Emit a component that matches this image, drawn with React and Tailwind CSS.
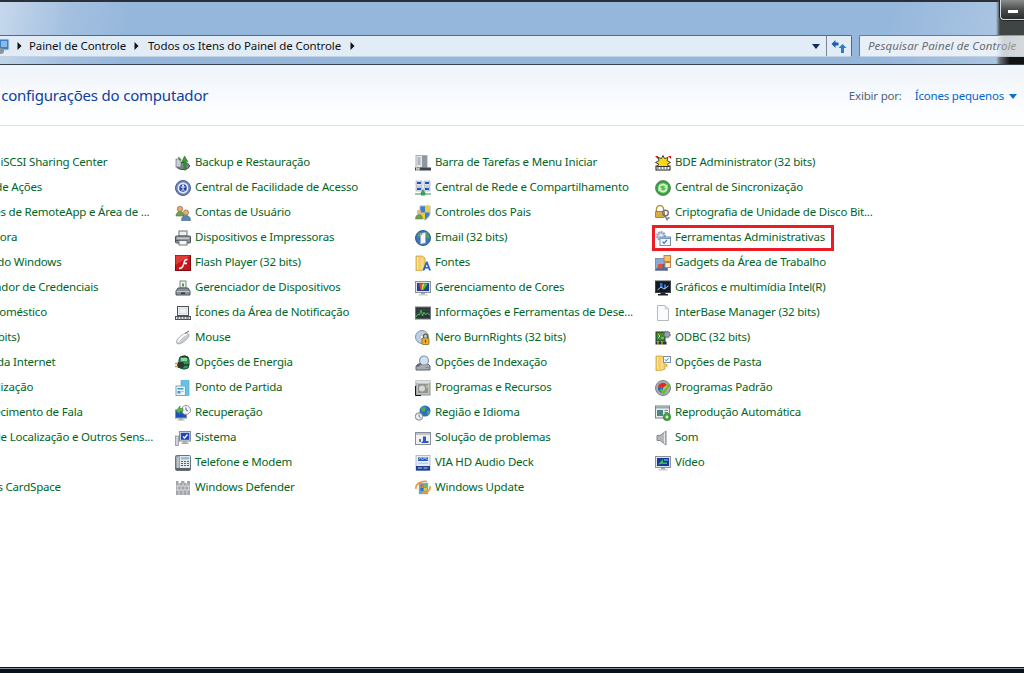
import React from "react";

const G = ({ children }) => (
  <svg width="16" height="16" viewBox="0 0 16 16" className="shrink-0">{children}</svg>
);

const Monitor = ({ children }) => (
  <>
    <rect x="0.5" y="1.5" width="15" height="11" fill="#dfe3e8" stroke="#8a929c" />
    <rect x="2" y="3" width="12" height="8" fill="#1d4fb8" />
    {children}
    <path d="M6 13h4v1.2H6z" fill="#9aa2ab" />
    <path d="M3.5 14.2h9V15.5h-9z" fill="#c4c9cf" />
  </>
);

const Folder = ({ children }) => (
  <>
    <path d="M1 1h6l3 2v11l-5 2H1z" fill="#f3cf6e" stroke="#c9a13e" strokeWidth="0.8" />
    <path d="M2.5 2v12M7 3v11" stroke="#fbe7ac" />
    {children}
  </>
);

const icons = {
  backup: (
    <G>
      <ellipse cx="8" cy="11" rx="6.5" ry="3.6" fill="#7d858d" stroke="#3f464d" />
      <rect x="1" y="4" width="5" height="8" fill="#c9ced3" stroke="#6c737a" strokeWidth="0.7" />
      <path d="M9 15V6L6.5 8 9.5 1 13 7l-2-1v9z" fill="#35a32f" stroke="#1c6a1d" strokeWidth="0.6" />
      <path d="M3.5 2l2 3.5" stroke="#2f8f2f" strokeWidth="1.4" />
    </G>
  ),
  facilidade: (
    <G>
      <circle cx="8" cy="8" r="7.5" fill="#6f87bd" stroke="#4a5f96" />
      <circle cx="8" cy="8" r="5.4" fill="#e9eef7" />
      <circle cx="8" cy="8" r="3.8" fill="#2947a6" />
      <circle cx="8" cy="5.6" r="1" fill="#fff" />
      <path d="M5.6 7h4.8M8 7v2.2l-1.6 2M8 9.2l1.6 2" stroke="#fff" strokeWidth="0.9" fill="none" />
    </G>
  ),
  contas: (
    <G>
      <circle cx="5" cy="4" r="2.8" fill="#e3a86b" stroke="#8c6a3e" strokeWidth="0.6" />
      <path d="M1 11c0-3 2-4.5 4-4.5S9 8 9 11z" fill="#74a04a" stroke="#4e7030" strokeWidth="0.6" />
      <circle cx="11" cy="7.5" r="2.6" fill="#dfae82" stroke="#7d5f3e" strokeWidth="0.6" />
      <path d="M6.5 15.5c0-3.5 2-5 4.5-5s4.5 1.5 4.5 5z" fill="#5c87b4" stroke="#3b5f87" strokeWidth="0.6" />
    </G>
  ),
  impressoras: (
    <G>
      <rect x="4" y="1" width="8" height="5" fill="#eef0f2" stroke="#6e757c" />
      <rect x="0.5" y="6" width="15" height="7" rx="1" fill="#8c939a" stroke="#4c5359" />
      <rect x="2" y="7.5" width="12" height="1.5" fill="#c5c9ce" />
      <rect x="4" y="10.5" width="8" height="4.5" fill="#f5f6f7" stroke="#6e757c" />
      <rect x="1.5" y="10" width="1.5" height="1" fill="#2b2f33" />
    </G>
  ),
  flash: (
    <G>
      <rect x="0.5" y="0.5" width="15" height="15" fill="#c9141b" stroke="#7d0a0e" />
      <path d="M0.5 0.5h15L0.5 10z" fill="#e23a35" />
      <path d="M4 12.5c3 0 3.5-2 4.3-5C9 5 10 3.5 12.5 3.5v1.8c-1.6 0-2.2.7-2.7 2.2H12v1.8H9.3C8.5 12.5 7 14.3 4 14.3z" fill="#fff" />
    </G>
  ),
  gerenciador: (
    <G>
      <rect x="5" y="1" width="6" height="7" fill="#eef2ee" stroke="#7d858c" />
      <rect x="7" y="3.5" width="2" height="3" fill="#4aa04a" />
      <path d="M3 8h10l2 3v4H1v-4z" fill="#8a9299" stroke="#4e555b" />
      <rect x="1.5" y="11" width="13" height="1" fill="#c2c7cc" />
      <rect x="6" y="12.5" width="4" height="1.5" fill="#333a40" />
    </G>
  ),
  notificacao: (
    <G>
      <rect x="2.5" y="1.5" width="11" height="9" fill="#fff" stroke="#4b5258" />
      <rect x="4" y="3" width="8" height="6" fill="#eef1f4" stroke="#a8aeb4" strokeWidth="0.5" />
      <rect x="0.5" y="11.5" width="15" height="3" fill="#dfe2e6" stroke="#4b5258" />
      <path d="M2 13h2M5 13h2M8 13h2M11 13h3" stroke="#4b5258" />
    </G>
  ),
  mouse: (
    <G>
      <path d="M2 13.5c-1.5-1.5 0-4 2.5-6.5S11 2.5 13 3.5s1 3.5-1.5 6-7 5.5-9.5 4z" fill="#c9ccd0" stroke="#8f959b" strokeWidth="0.7" />
      <path d="M3 12c1-3 5-7 9-8" stroke="#f8f9fa" strokeWidth="2" fill="none" />
      <path d="M10 3.5L14 1" stroke="#3c4248" strokeWidth="0.8" />
    </G>
  ),
  energia: (
    <G>
      <rect x="4" y="1" width="10" height="13" rx="4" fill="#2c9c52" stroke="#1f4d33" />
      <path d="M6 3h6v3H6z" fill="#8ad79e" />
      <path d="M7 2l3-1 3 2" stroke="#222" fill="none" />
      <rect x="2" y="7" width="7" height="6" rx="2" fill="#30373d" />
      <path d="M0 8.5h3M0 11.5h3" stroke="#c2a33a" strokeWidth="1.3" />
      <path d="M9 10h5" stroke="#2a3036" strokeWidth="1.5" />
    </G>
  ),
  partida: (
    <G>
      <path d="M6 0.5h8v15H6z" fill="#64c4e8" stroke="#48a3c9" strokeWidth="0.6" />
      <rect x="1" y="6" width="9.5" height="9.5" fill="#eaf5fb" stroke="#7aa8c0" />
      <rect x="2.5" y="8" width="6" height="1.5" fill="#3d9acb" />
      <rect x="2.5" y="11" width="3" height="2.5" fill="#3d9acb" />
      <rect x="6.5" y="11" width="2" height="1" fill="#8fc1da" />
    </G>
  ),
  recuperacao: (
    <G>
      <rect x="0.5" y="5" width="11" height="8" fill="#1d4fb8" stroke="#8a929c" />
      <path d="M4.5 13h3v1.5h-3zM2.5 14.5h7v1h-7z" fill="#a4abb2" />
      <circle cx="11" cy="5" r="4.5" fill="#f4f5f6" stroke="#8a929c" />
      <path d="M11 2.5V5l2 1" stroke="#3a4046" strokeWidth="0.8" fill="none" />
      <path d="M1 6l4-5v2.5h3v3H5V9z" fill="#55b746" stroke="#2f7d2a" strokeWidth="0.5" />
    </G>
  ),
  sistema: (
    <G>
      <rect x="0.5" y="6" width="3" height="9.5" fill="#cfd3d7" stroke="#7f868c" strokeWidth="0.7" />
      <rect x="4.5" y="1.5" width="11" height="9.5" fill="#e4e7ea" stroke="#848b92" />
      <rect x="5.8" y="2.8" width="8.5" height="7" fill="#1746c6" />
      <path d="M8 6.5l1.5 1.5 3-3.5" stroke="#fff" strokeWidth="1.3" fill="none" />
      <path d="M8 11h3.5v1.5H8zM6.5 12.5h7V14h-7z" fill="#a4abb2" />
    </G>
  ),
  telefone: (
    <G>
      <rect x="0.5" y="0.5" width="15" height="15" rx="1" fill="#e6e9ec" stroke="#6b737a" />
      <rect x="1.5" y="1.5" width="3" height="12" fill="#bcc2c8" stroke="#6b737a" strokeWidth="0.5" />
      <rect x="6" y="2" width="8" height="2.5" fill="#8cc0de" />
      <path d="M6 6h2v1H6zM9 6h2v1H9zM12 6h2v1h-2zM6 8h2v1H6zM9 8h2v1H9zM12 8h2v1h-2zM6 10h2v1H6zM9 10h2v1H9zM12 10h2v1h-2z" fill="#59626a" />
      <rect x="1" y="13" width="14" height="2" fill="#59626a" />
    </G>
  ),
  defender: (
    <G>
      <path d="M1 1h2.5v2H6V1h3.500v2H12V1h3v14H1z" fill="#a2a6aa" />
      <path d="M1 6h14M1 10h14M4 3v3M8 3v3M12 3v3M2.5 6v4M6 6v4M10 6v4M13.5 6v4M4 10v5M8 10v5M12 10v5" stroke="#dfe1e3" strokeWidth="0.8" />
    </G>
  ),
  barra: (
    <G>
      <rect x="1" y="0.5" width="11" height="12" fill="#e6e9ec" stroke="#a9afb5" />
      <rect x="7" y="1" width="5" height="11" fill="#8f979f" />
      <path d="M2.5 3h3M2.5 5h3M2.5 7h3M2.5 9h3" stroke="#7d858d" />
      <rect x="0" y="12.5" width="16" height="3" fill="#3d444a" />
      <rect x="1" y="11.5" width="3.5" height="4" fill="#e9eef3" />
      <rect x="1.5" y="12" width="1.2" height="1.2" fill="#d84a2e" />
      <rect x="3" y="12" width="1.2" height="1.2" fill="#5aae3a" />
      <rect x="1.5" y="13.6" width="1.2" height="1.2" fill="#2f6ed0" />
      <rect x="3" y="13.6" width="1.2" height="1.2" fill="#e8bc2a" />
    </G>
  ),
  rede: (
    <G>
      <rect x="1" y="1" width="6" height="5" fill="#dfe6ee" stroke="#7f8f9f" strokeWidth="0.5" />
      <rect x="9" y="1" width="6" height="5" fill="#dfe6ee" stroke="#7f8f9f" strokeWidth="0.5" />
      <rect x="1" y="7" width="6" height="4" fill="#dfe6ee" stroke="#7f8f9f" strokeWidth="0.5" />
      <rect x="9" y="7" width="6" height="4" fill="#dfe6ee" stroke="#7f8f9f" strokeWidth="0.5" />
      <path d="M2 2h4v2H2zM10 2h4v2h-4zM2 8h4v2H2zM10 8h4v2h-4z" fill="#2450c4" />
      <path d="M0 14h16" stroke="#5aa76e" strokeWidth="1.2" />
      <path d="M8 9l3 5H5z" fill="#3f9b62" />
      <rect x="6" y="14" width="4" height="1.5" fill="#3f9b62" />
    </G>
  ),
  pais: (
    <G>
      <path d="M5 1h10v7c0 4-5 7-5 7S5 12 5 8z" fill="#3b7fd0" stroke="#a3b4c4" />
      <path d="M10 1h5v6.5h-5zM5 7.5h5V15C7 13.5 5 11 5 7.5z" fill="#eecb45" />
      <circle cx="4" cy="7" r="2.2" fill="#e3b689" />
      <path d="M0.5 14c0-3 1.5-4.5 3.5-4.5S7.5 11 7.5 14z" fill="#6fa04c" stroke="#4b7530" strokeWidth="0.5" />
    </G>
  ),
  email: (
    <G>
      <circle cx="8" cy="8" r="7.5" fill="#3b74b8" stroke="#2d5d96" />
      <path d="M2 5c2-3 4-3 5-2l-1 3-3 2zM11 2c2 1 4 4 3 7l-2-1-2-3z" fill="#5a9c5a" />
      <path d="M5.5 3.5L10.5 2.5V13l-5 1z" fill="#f5f7f9" stroke="#9aa8b8" strokeWidth="0.5" />
      <rect x="6" y="3.5" width="1.2" height="1.2" fill="#cf3030" />
    </G>
  ),
  fontes: (
    <G>
      <Folder />
      <path d="M7.5 15.5l3.5-9h1.5l3.5 9h-2l-.7-2h-3.1l-.7 2zm3.3-3.5h2l-1-2.8z" fill="#2a62c6" />
    </G>
  ),
  cores: (
    <G>
      <Monitor>
        <rect x="2" y="3" width="12" height="8" fill="#20458f" />
        <path d="M4 3.5h3.5L6.5 10H5.5z" fill="#e94a3a" />
        <path d="M7.5 3.5H10L7.5 10H6.5z" fill="#e9d83a" />
        <path d="M10 3.5h3L8.5 10H7.5z" fill="#4fc04a" />
      </Monitor>
    </G>
  ),
  desempenho: (
    <G>
      <rect x="0.5" y="2" width="15" height="12" fill="#2f353a" stroke="#6f767c" />
      <path d="M1 12l2-3 1.5 1L6 5l1.5 6L9 7l1.5 3L12 8l3 2" stroke="#3fd04a" fill="none" strokeWidth="0.9" />
      <path d="M1 5h14M1 8h14" stroke="#556068" strokeWidth="0.4" />
    </G>
  ),
  nero: (
    <G>
      <circle cx="7" cy="7" r="6.5" fill="#bcd0e4" stroke="#7f93a8" />
      <circle cx="7" cy="7" r="1.8" fill="#fff" stroke="#8a9aac" strokeWidth="0.5" />
      <rect x="7" y="8" width="7" height="6.5" rx="1" fill="#e8b032" stroke="#7d5a14" strokeWidth="0.7" />
      <path d="M8.5 8V6.2a2 2 0 0 1 4 0V8" fill="none" stroke="#6c5a2c" strokeWidth="1.2" />
      <rect x="10" y="10" width="1" height="2.5" fill="#4a3608" />
    </G>
  ),
  indexacao: (
    <G>
      <path d="M3 9h10l2 2v4H1v-4z" fill="#a5abb1" stroke="#5e656b" />
      <rect x="11" y="12" width="2.5" height="1" fill="#48b04a" />
      <circle cx="9" cy="5.5" r="4.5" fill="#cfe2f2" stroke="#8a95a0" strokeWidth="1.2" />
      <path d="M6 8.5L2 11.5" stroke="#63696f" strokeWidth="2" />
    </G>
  ),
  programas: (
    <G>
      <rect x="1" y="1" width="14" height="14" fill="#bfc3c4" stroke="#8d9192" />
      <rect x="3" y="4" width="10" height="9" fill="#8f9492" />
      <circle cx="7" cy="8.5" r="3" fill="#d5d8d8" />
      <rect x="1" y="1" width="14" height="2" fill="#dcdfe0" />
      <path d="M0.5 6v9.5H6" stroke="#14181c" fill="none" />
      <rect x="11" y="5" width="2" height="3" fill="#d5b84a" />
    </G>
  ),
  regiao: (
    <G>
      <circle cx="10" cy="6" r="5.5" fill="#2a6fc0" />
      <path d="M6 3c2-2 4-1 5 0l-1 3-3 1zM12 6l3 0c0 2-1 3-2 4l-1-1z" fill="#54ad3a" />
      <circle cx="4" cy="11.5" r="3.7" fill="#eef0f2" stroke="#7d848b" />
      <path d="M4 9.5v2l1.5 1" stroke="#444" strokeWidth="0.7" fill="none" />
    </G>
  ),
  solucao: (
    <G>
      <rect x="0.5" y="2.5" width="15" height="12" fill="#eff1f3" stroke="#868d94" />
      <rect x="1" y="3" width="14" height="2" fill="#c0c6cc" />
      <rect x="8" y="6.5" width="3" height="5" fill="#2a58c8" />
      <path d="M6 13l2-2h5.5v2z" fill="#2a58c8" />
      <rect x="4" y="9" width="2" height="3" fill="#6d7d8d" />
    </G>
  ),
  via: (
    <G>
      <rect x="1" y="0.5" width="14" height="15" fill="#e7edf7" stroke="#8a9ab5" strokeWidth="0.6" />
      <path d="M3 2.5h10v3.5H3z" fill="#2b5ab8" />
      <path d="M3.5 4.5l2-1.5 2 1.5 2-1.5 3 1.5" stroke="#fff" strokeWidth="0.6" fill="none" />
      <path d="M3 7.5h10v1.5H3z" fill="#bcd0ea" />
      <rect x="1" y="11" width="14" height="4.5" fill="#1f3f94" />
      <path d="M3 13h4M8.5 13h4" stroke="#bcd0ea" />
    </G>
  ),
  update: (
    <G>
      <rect x="4" y="3" width="9" height="11" fill="#58a6df" stroke="#8abde3" strokeWidth="0.5" />
      <rect x="5.5" y="4.5" width="2.8" height="2.8" fill="#e8652e" />
      <rect x="9" y="4.5" width="2.8" height="2.8" fill="#71bf44" />
      <rect x="5.5" y="8" width="2.8" height="2.8" fill="#2a6fd0" />
      <rect x="9" y="8" width="2.8" height="2.8" fill="#f2c52e" />
      <path d="M1 9C0 4 6 0.5 12 1.5" stroke="#f09a3a" strokeWidth="1.6" fill="none" />
      <path d="M15 6c1 4-3 7-8 7" stroke="#f09a3a" strokeWidth="1.6" fill="none" />
    </G>
  ),
  bde: (
    <G>
      <rect x="1" y="11" width="14" height="4" fill="#fff" stroke="#14181c" />
      <path d="M0 1l3 0 0 3zM13 1h3v3z" fill="#d8161c" />
      <path d="M8 0.5l1.5 3 3.5-1-1 3 3.5 2-3 1.5 1 2.5H2.5l1-2.5-3-1.5 3.5-2-1-3 3.5 1z" fill="#f7d81c" stroke="#14181c" strokeWidth="0.8" />
      <path d="M2 13h12" stroke="#14181c" strokeWidth="0.8" strokeDasharray="2 1" />
    </G>
  ),
  sincronizacao: (
    <G>
      <circle cx="8" cy="8" r="7.5" fill="#2f9c3c" stroke="#6e8f74" />
      <circle cx="8" cy="8" r="5.6" fill="#57c058" />
      <path d="M3.5 8a4.5 4.5 0 0 1 8-2.8l1-1V8H9l1.3-1.4A3 3 0 0 0 5 8zM12.5 8a4.5 4.5 0 0 1-8 2.8l-1 1V8H7l-1.3 1.4A3 3 0 0 0 11 8z" fill="#d8f3c8" />
    </G>
  ),
  criptografia: (
    <G>
      <path d="M1.5 7V4a3.5 3.5 0 0 1 7 0v3" fill="none" stroke="#b89338" strokeWidth="1.5" />
      <rect x="0.5" y="6.5" width="9" height="6" rx="0.5" fill="#d7ad46" stroke="#86681e" strokeWidth="0.7" />
      <circle cx="10.5" cy="8" r="2.8" fill="none" stroke="#6e757c" strokeWidth="1.4" />
      <path d="M10 10.5l2.5 5M12.5 13.5l2-1" stroke="#6e757c" strokeWidth="1.4" />
    </G>
  ),
  ferramentas: (
    <G>
      <circle cx="6" cy="6" r="4" fill="#b6c7d8" stroke="#8ea3b8" strokeWidth="2" strokeDasharray="1.6 1" />
      <circle cx="6" cy="6" r="1.8" fill="#eef3f8" />
      <rect x="5" y="7" width="10.5" height="8.5" fill="#f5f8fb" stroke="#7c8fa3" />
      <rect x="5.5" y="7.5" width="9.5" height="1.5" fill="#6f9ad0" />
      <path d="M7.5 11.5l1.5 1.8 3-3.5" stroke="#2d68c0" strokeWidth="1.1" fill="none" />
    </G>
  ),
  gadgets: (
    <G>
      <rect x="0.5" y="3.5" width="12" height="12" fill="#3f6db0" stroke="#7e90a8" />
      <path d="M1 4h11v4C8 8 4 10 1 14z" fill="#86abdc" />
      <rect x="9" y="0.5" width="6.5" height="6" fill="#f3c26f" stroke="#c9803a" />
      <rect x="10" y="7.5" width="5.5" height="5" fill="#fbeed8" stroke="#c9803a" />
      <rect x="3" y="9" width="4.5" height="4.5" fill="#e4512c" />
    </G>
  ),
  graficos: (
    <G>
      <rect x="0.5" y="1" width="15" height="11.5" fill="#14181f" stroke="#3e454c" />
      <path d="M5 3h2.5v5H5zM9 4.5h2V9H9z" fill="#2c74d8" />
      <path d="M2.5 10L6 7l3 2 4.5-3" stroke="#bcd8f5" fill="none" strokeWidth="0.9" />
      <path d="M5.5 12.5h5V14h-5zM3 14h10v1.5H3z" fill="#1d2227" />
    </G>
  ),
  interbase: (
    <G>
      <path d="M2.5 0.5h7.5l3.5 3.5v11.5h-11z" fill="#fafbfc" stroke="#b4b9be" />
      <path d="M10 0.5V4h3.5z" fill="#dfe2e5" stroke="#b4b9be" strokeWidth="0.5" />
    </G>
  ),
  odbc: (
    <G>
      <rect x="1" y="2" width="9" height="9" fill="#3c8a3c" stroke="#1b3a20" />
      <path d="M3 4l2 2-2 2M6 8h3" stroke="#e6d63a" fill="none" />
      <path d="M0.5 11.5h11v3h-11z" fill="#2b3138" />
      <path d="M3 11v4M7 11v4" stroke="#e6d63a" />
      <circle cx="12" cy="4.5" r="3" fill="#9aa2aa" stroke="#5e656c" strokeWidth="1.4" strokeDasharray="1.2 0.8" />
    </G>
  ),
  pasta: (
    <G>
      <Folder />
      <rect x="8.5" y="1.5" width="7" height="6" fill="#f7f9fb" stroke="#7c8fa3" />
      <path d="M10 4.5l1.2 1.3 2.3-2.5" stroke="#2d68c0" strokeWidth="0.9" fill="none" />
      <rect x="10.5" y="9" width="2" height="3" fill="#dbb24e" />
    </G>
  ),
  padrao: (
    <G>
      <circle cx="8" cy="8" r="7.5" fill="#a8adb2" stroke="#7d8389" />
      <path d="M3 7a5 5 0 0 1 9-2L8 8z" fill="#d8301e" />
      <path d="M12 5a5 5 0 0 1 1 4L8 8z" fill="#f1c91e" />
      <path d="M3 7a5 5 0 0 0 4 6l1-5z" fill="#2a62cc" />
      <path d="M5.5 9.5l3 3.5 6-9" stroke="#5ec12e" strokeWidth="2.2" fill="none" />
    </G>
  ),
  reproducao: (
    <G>
      <rect x="0.5" y="1" width="14" height="12" fill="#e9ecee" stroke="#7c848b" />
      <rect x="1" y="1.5" width="13" height="2" fill="#9ca7b1" />
      <rect x="2" y="5" width="6" height="6" fill="#45897d" />
      <path d="M9.5 5.5h3.5M9.5 7.5h3.5M9.5 9.5h2" stroke="#7d858c" />
      <circle cx="12" cy="12" r="3.8" fill="#3fa53a" stroke="#25722a" strokeWidth="0.5" />
      <circle cx="12" cy="12" r="1.4" fill="#e8f6e0" />
    </G>
  ),
  som: (
    <G>
      <path d="M2 5.5h3L11 1v14L5 10.5H2z" fill="#b3b8bc" stroke="#858b91" />
      <path d="M9.5 2.5v11" stroke="#e7e9eb" />
    </G>
  ),
  video: (
    <G>
      <Monitor>
        <rect x="2" y="3" width="12" height="8" fill="#16389e" />
        <path d="M3 9.5L8 4v3.5h4V9H6.5z" fill="#2fc24a" />
        <path d="M9 5h4" stroke="#9fd4f5" />
      </Monitor>
    </G>
  ),
};

const col0 = [
  "Adaptec iSCSI Sharing Center",
  "Central de Ações",
  "Conexões de RemoteApp e Área de ...",
  "Data e Hora",
  "Firewall do Windows",
  "Gerenciador de Credenciais",
  "Grupo Doméstico",
  "Java (32 bits)",
  "Opções da Internet",
  "Personalização",
  "Reconhecimento de Fala",
  "Sensor de Localização e Outros Sens...",
  "Teclado",
  "Windows CardSpace",
].map((label) => [null, label]);

const col1 = [
  ["backup", "Backup e Restauração"],
  ["facilidade", "Central de Facilidade de Acesso"],
  ["contas", "Contas de Usuário"],
  ["impressoras", "Dispositivos e Impressoras"],
  ["flash", "Flash Player (32 bits)"],
  ["gerenciador", "Gerenciador de Dispositivos"],
  ["notificacao", "Ícones da Área de Notificação"],
  ["mouse", "Mouse"],
  ["energia", "Opções de Energia"],
  ["partida", "Ponto de Partida"],
  ["recuperacao", "Recuperação"],
  ["sistema", "Sistema"],
  ["telefone", "Telefone e Modem"],
  ["defender", "Windows Defender"],
];

const col2 = [
  ["barra", "Barra de Tarefas e Menu Iniciar"],
  ["rede", "Central de Rede e Compartilhamento"],
  ["pais", "Controles dos Pais"],
  ["email", "Email (32 bits)"],
  ["fontes", "Fontes"],
  ["cores", "Gerenciamento de Cores"],
  ["desempenho", "Informações e Ferramentas de Dese..."],
  ["nero", "Nero BurnRights (32 bits)"],
  ["indexacao", "Opções de Indexação"],
  ["programas", "Programas e Recursos"],
  ["regiao", "Região e Idioma"],
  ["solucao", "Solução de problemas"],
  ["via", "VIA HD Audio Deck"],
  ["update", "Windows Update"],
];

const col3 = [
  ["bde", "BDE Administrator (32 bits)"],
  ["sincronizacao", "Central de Sincronização"],
  ["criptografia", "Criptografia de Unidade de Disco Bit..."],
  ["ferramentas", "Ferramentas Administrativas", true],
  ["gadgets", "Gadgets da Área de Trabalho"],
  ["graficos", "Gráficos e multimídia Intel(R)"],
  ["interbase", "InterBase Manager (32 bits)"],
  ["odbc", "ODBC (32 bits)"],
  ["pasta", "Opções de Pasta"],
  ["padrao", "Programas Padrão"],
  ["reproducao", "Reprodução Automática"],
  ["som", "Som"],
  ["video", "Vídeo"],
];

function Row({ icon, label, marked }) {
  return (
    <div className="relative flex h-[25px] items-center gap-1 whitespace-nowrap">
      {icon ? icons[icon] : <span className="w-4 shrink-0" />}
      <span className="mb-[2px]">{label}</span>
      {marked && (
        <span className="absolute -left-[3px] top-0 h-[26px] w-[182px] border-[3px] border-[#ed1c24]" />
      )}
    </div>
  );
}

const Caret = () => (
  <svg width="5" height="8" viewBox="0 0 5 8" className="shrink-0">
    <path d="M0.5 0l4 4-4 4z" fill="#111" />
  </svg>
);

export default function App() {
  return (
    <div
      className="relative flex h-[673px] w-[1024px] flex-col overflow-hidden bg-white text-[11.5px] tracking-[-0.2px]"
      style={{ fontFamily: "'Noto Sans', sans-serif" }}
    >
      {/* window chrome */}
      <div className="flex h-[65px] shrink-0 flex-col border-b-[1px] border-t-[2px] border-b-[#39424c] border-t-[#2b3038] bg-[linear-gradient(100deg,#c6d8ec_0px,#a4c0e0_70px,#96b7dc_130px,#96b7dc_880px,#aac5e2_990px)]">
        <div className="mt-[33px] flex h-[22px] gap-[7px]">
          <div className="-ml-[3px] flex h-[22px] w-[855px] items-center rounded-r-[2px] border border-[#5c6877] border-b-[#c3d2e2] bg-[#e2ecf7] tracking-[-0.1px] text-[#111]">
            <svg width="14" height="16" viewBox="0 0 14 16" className="shrink-0">
              <rect x="1" y="1" width="10" height="11" rx="1" fill="#3c7fc8" stroke="#cfe2f4" />
              <path d="M3 4h6M3 6h6M3 8h6" stroke="#d8f0ff" />
              <circle cx="3" cy="13" r="3" fill="#8b939b" />
            </svg>
            <span className="ml-[5px]">
              <Caret />
            </span>
            <span className="ml-[7px]">Painel de Controle</span>
            <span className="ml-[8px]">
              <Caret />
            </span>
            <span className="ml-[9px]">Todos os Itens do Painel de Controle</span>
            <span className="ml-[9px]">
              <Caret />
            </span>
            <span className="ml-auto mr-[6px]">
              <svg width="8" height="5" viewBox="0 0 8 5">
                <path d="M0 0h8L4 5z" fill="#0f2a5c" />
              </svg>
            </span>
            <div className="flex h-full w-[25px] items-center justify-center border-l border-[#7a8796]">
              <svg width="16" height="16" viewBox="0 0 16 16">
                <path d="M0.5 6L4.5 2V4.5h3V7.5h-3v2.5z" fill="#1f5fa8" />
                <path d="M15.5 10L11.5 6 7.5 10h2.5v5h3v-5z" fill="#2f7cc4" />
              </svg>
            </div>
          </div>
          <div className="flex h-[22px] flex-1 items-center rounded-l-[2px] border border-[#6e7a88] border-b-[#c3d2e2] border-r-0 bg-[#e8eff7] pl-[8px] italic tracking-[0.1px] text-[#6d6d6d]">
            Pesquisar Painel de Controle
          </div>
        </div>
      </div>

      {/* header */}
      <div className="flex h-[61px] shrink-0 items-center justify-between border-b border-[#d9e3ec] bg-[linear-gradient(180deg,#eef4fb_0%,#fbfdff_70%,#ffffff_100%)] pr-[7px] pt-[2px]">
        <div className="-ml-[70px] mb-[2px] whitespace-nowrap text-[15px] tracking-[-0.2px] text-[#0f3f9f]">
          Ajustar as configurações do computador
        </div>
        <div className="flex items-center">
          <span className="text-[#4f6178]">Exibir por:</span>
          <span className="ml-[13px] text-[#0066cc]">Ícones pequenos</span>
          <svg width="8" height="5" viewBox="0 0 8 5" className="ml-[5px]">
            <path d="M0 0h8L4 5z" fill="#0f6fd0" />
          </svg>
        </div>
      </div>

      {/* item grid */}
      <div className="-ml-[65px] grid w-[960px] flex-1 grid-cols-4 content-start pt-[24px] text-[#00661f]">
        {[col0, col1, col2, col3].map((col, i) => (
          <div key={i} className="flex flex-col">
            {col.map(([icon, label, marked]) => (
              <Row key={label} icon={icon} label={label} marked={marked} />
            ))}
          </div>
        ))}
      </div>

      {/* desktop showing below the window */}
      <div className="flex h-[6px] shrink-0 flex-col border-t border-[#0c1014] bg-[#06121a]">
        <div className="h-px bg-[#8a9096]" />
      </div>

      {/* blurred glass and minimise button over the top right corner */}
      <div className="absolute right-0 top-0 flex h-[64px] w-[28px] flex-col">
        <div className="h-[35px] bg-[linear-gradient(90deg,transparent,#3f4444_4px)]" />
        <div className="h-[22px] bg-[linear-gradient(90deg,transparent,#b4b6b680_8px,#c2c4c480)]" />
        <div className="h-[7px] bg-[linear-gradient(90deg,transparent,#6a6e70_4px,#101214_14px)]" />
      </div>
      <div className="absolute right-0 top-0 flex h-[20px] w-[24px] items-center justify-center rounded-bl-[4px] border-b border-l border-[#d8dcdc] bg-[linear-gradient(180deg,#8a8d8b,#4a4d4d_50%,#2b2e2e)] shadow-[0_0_0_1px_#22262a]">
        <span className="mt-[4px] h-[3px] w-[10px] bg-white" />
      </div>
    </div>
  );
}
